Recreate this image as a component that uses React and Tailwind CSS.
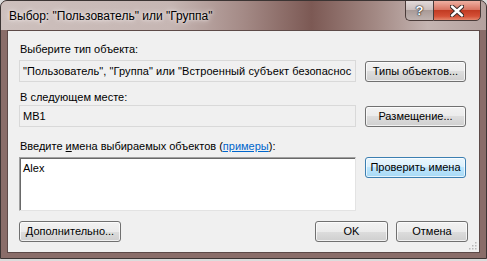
import React from 'react';

const font = { fontFamily: '"Liberation Sans", Arial, sans-serif' };

const Btn = ({ children, hot, className = '' }) => (
  <div
    className={`h-[21px] flex items-center justify-center rounded-[3px] border text-[11px] text-black ${
      hot
        ? 'border-[#3c7fb1] bg-[linear-gradient(#eaf6fd_0%,#d9f0fc_50%,#bee6fd_50%,#a7d9f5_100%)]'
        : 'border-[#707070] bg-[linear-gradient(#f2f2f2_0%,#ebebeb_50%,#dddddd_50%,#cfcfcf_100%)]'
    } shadow-[inset_0_0_0_1px_rgba(255,255,255,0.7)] ${className}`}
  >
    {children}
  </div>
);

const Label = ({ children, className = '' }) => (
  <div className={`h-[15px] leading-[15px] text-[11px] text-black ${className}`}>{children}</div>
);

export default function App() {
  return (
    <div className="w-[487px] h-[261px] bg-[#dcdcdc] overflow-hidden" style={font}>
      <div className="w-[487px] h-[259px] rounded-t-[7px] border border-[#3b3433] bg-[#8a6d69] flex flex-col overflow-hidden">
        {/* title bar */}
        <div className="h-[29px] shrink-0 flex items-start justify-between bg-[linear-gradient(to_right,#cdc0bd_0%,#c6b6b3_35%,#a48a86_50%,#7c5954_64%,#a28883_77%,#c5b5b2_88%,#b4a19e_100%)]">
          <div className="pl-[8px] pt-[8px] text-[12px] leading-[15px] text-black [text-shadow:0_0_6px_#f4eeee,0_0_3px_#f4eeee]">
            Выбор: "Пользователь" или "Группа"
          </div>
          <div className="flex mr-[5px] -mt-px">
            <div className="w-[28px] h-[21px] rounded-bl-[5px] border border-[#4a3b39] border-r-0 bg-[linear-gradient(#e2dad9_0%,#cbbfbd_45%,#a99b98_50%,#bfb2af_100%)] flex items-center justify-center">
              <span className="text-[13px] font-bold text-white leading-none [text-shadow:0_0_1px_#222,0_0_1px_#222,0_0_2px_#333]">?</span>
            </div>
            <div className="w-[48px] h-[21px] rounded-br-[5px] border border-[#4a3b39] bg-[linear-gradient(#eeb0a2_0%,#d87563_45%,#c23b23_50%,#d45036_80%,#e4866c_100%)] flex items-center justify-center">
              <svg width="14" height="12" viewBox="0 0 14 12">
                <path d="M2 1.5 L12 10.5 M12 1.5 L2 10.5" stroke="#3a2a28" strokeWidth="4.4" strokeLinecap="round" />
                <path d="M2 1.5 L12 10.5 M12 1.5 L2 10.5" stroke="#ffffff" strokeWidth="2.4" strokeLinecap="round" />
              </svg>
            </div>
          </div>
        </div>

        {/* client area */}
        <div className="mx-[6px] h-[223px] border border-[#5d4a48] bg-[#f0f0f0] flex flex-col px-[11px] pt-[11px] relative">
          <Label className="pl-[1px]">Выберите тип объекта:</Label>
          <div className="mt-[3px] flex items-start gap-[9px]">
            <div className="w-[337px] h-[22px] border border-[#d9d9d9] bg-[#f0f0f0] text-[11px] leading-[20px] pl-[3px] tracking-[0.08px] overflow-hidden whitespace-nowrap">
              "Пользователь", "Группа" или "Встроенный субъект безопаснос
            </div>
            <Btn className="w-[101px] mt-[1px]">Типы объектов...</Btn>
          </div>

          <Label className="mt-[8px] pl-[1px]">В следующем месте:</Label>
          <div className="flex items-start gap-[9px]">
            <div className="w-[337px] h-[22px] border border-[#d9d9d9] bg-[#f0f0f0] text-[11px] leading-[20px] pl-[3px]">MB1</div>
            <Btn className="w-[101px] mt-[1px]">Размещение...</Btn>
          </div>

          <Label className="mt-[12px] pl-[1px]">
            Введите <span className="underline">и</span>мена выбираемых объектов (
            <span className="text-[#0066cc] underline">примеры</span>):
          </Label>
          <div className="mt-[3px] flex items-start gap-[9px]">
            <div className="w-[337px] h-[54px] bg-white border border-t-[#a0a0a0] border-l-[#a0a0a0] border-b-[#e3e3e3] border-r-[#e3e3e3] shadow-[inset_1px_1px_0_#696969] text-[11px] leading-[15px] pl-[3px] pt-[3px]">
              Alex
            </div>
            <Btn hot className="w-[101px]">Проверить имена</Btn>
          </div>

          <div className="mt-[10px] flex items-start">
            <Btn className="w-[102px]">Дополнительно...</Btn>
            <Btn className="w-[73px] ml-auto">OK</Btn>
            <Btn className="w-[72px] ml-[8px]">Отмена</Btn>
          </div>

          {/* size grip */}
          <svg className="absolute right-[2px] bottom-[2px]" width="10" height="10" viewBox="0 0 10 10">
            {[[8, 2], [8, 5], [5, 5], [8, 8], [5, 8], [2, 8]].map(([x, y], i) => (
              <rect key={i} x={x} y={y} width="1.5" height="1.5" fill="#b8b8b8" />
            ))}
          </svg>
        </div>
      </div>
    </div>
  );
}
